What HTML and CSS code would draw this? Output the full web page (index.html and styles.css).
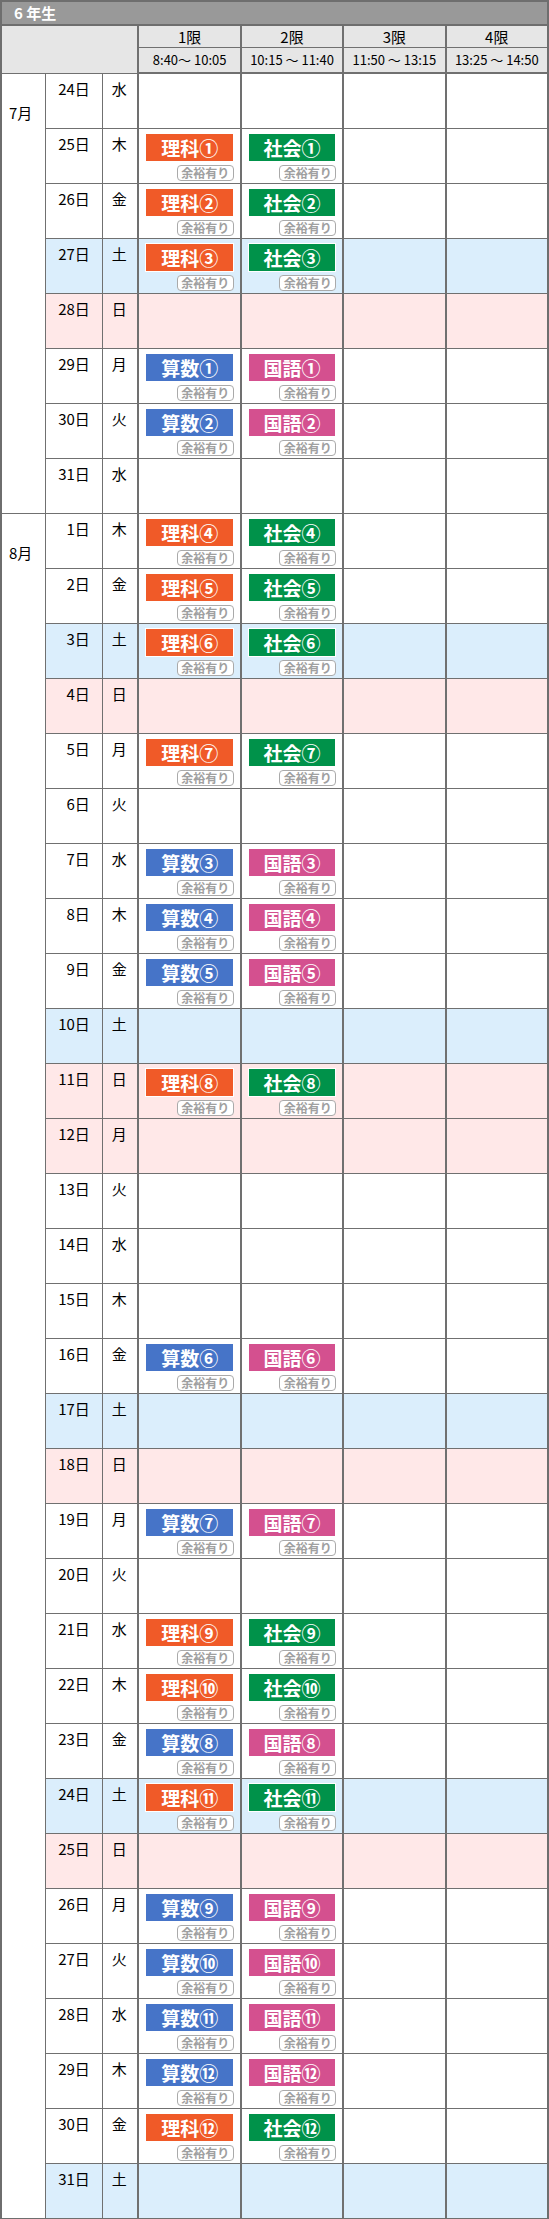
FILE: index.html
```html
<!DOCTYPE html>
<html lang="ja">
<head>
    <meta charset="UTF-8">
    <meta name="viewport" content="width=device-width, initial-scale=1.0">
    <title>夏期講習 日程表 6年生</title>
    <link rel="stylesheet" href="styles.css">
</head>

<body>
    <table class="schedule">
        <colgroup>
            <col class="col-month">
            <col class="col-date">
            <col class="col-wday">
            <col class="col-period">
            <col class="col-period">
            <col class="col-period">
            <col class="col-period">
        </colgroup>
        <thead>
            <tr>
                <th colspan="7" class="grade">6 年生</th>
            </tr>
            <tr>
                <th colspan="3" rowspan="2" class="corner"></th>
                <th class="period">1限</th>
                <th class="period">2限</th>
                <th class="period">3限</th>
                <th class="period">4限</th>
            </tr>
            <tr>
                <th class="time">8:40～ 10:05</th>
                <th class="time">10:15 ～ 11:40</th>
                <th class="time">11:50 ～ 13:15</th>
                <th class="time">13:25 ～ 14:50</th>
            </tr>
        </thead>
        <tbody>
            <!-- 7月 -->
            <tr>
                <td rowspan="8" class="month">7月</td>
                <td class="date">24日</td><td class="wday">水</td>
                <td></td><td></td><td></td><td></td>
            </tr>
            <tr>
                <td class="date">25日</td><td class="wday">木</td>
                <td><span class="lesson rika">理科①</span><span class="yoyu">余裕有り</span></td>
                <td><span class="lesson shakai">社会①</span><span class="yoyu">余裕有り</span></td>
                <td></td><td></td>
            </tr>
            <tr>
                <td class="date">26日</td><td class="wday">金</td>
                <td><span class="lesson rika">理科②</span><span class="yoyu">余裕有り</span></td>
                <td><span class="lesson shakai">社会②</span><span class="yoyu">余裕有り</span></td>
                <td></td><td></td>
            </tr>
            <tr class="sat">
                <td class="date">27日</td><td class="wday">土</td>
                <td><span class="lesson rika">理科③</span><span class="yoyu">余裕有り</span></td>
                <td><span class="lesson shakai">社会③</span><span class="yoyu">余裕有り</span></td>
                <td></td><td></td>
            </tr>
            <tr class="sun">
                <td class="date">28日</td><td class="wday">日</td>
                <td></td><td></td><td></td><td></td>
            </tr>
            <tr>
                <td class="date">29日</td><td class="wday">月</td>
                <td><span class="lesson sansu">算数①</span><span class="yoyu">余裕有り</span></td>
                <td><span class="lesson kokugo">国語①</span><span class="yoyu">余裕有り</span></td>
                <td></td><td></td>
            </tr>
            <tr>
                <td class="date">30日</td><td class="wday">火</td>
                <td><span class="lesson sansu">算数②</span><span class="yoyu">余裕有り</span></td>
                <td><span class="lesson kokugo">国語②</span><span class="yoyu">余裕有り</span></td>
                <td></td><td></td>
            </tr>
            <tr>
                <td class="date">31日</td><td class="wday">水</td>
                <td></td><td></td><td></td><td></td>
            </tr>

            <!-- 8月 -->
            <tr>
                <td rowspan="31" class="month">8月</td>
                <td class="date">1日</td><td class="wday">木</td>
                <td><span class="lesson rika">理科④</span><span class="yoyu">余裕有り</span></td>
                <td><span class="lesson shakai">社会④</span><span class="yoyu">余裕有り</span></td>
                <td></td><td></td>
            </tr>
            <tr>
                <td class="date">2日</td><td class="wday">金</td>
                <td><span class="lesson rika">理科⑤</span><span class="yoyu">余裕有り</span></td>
                <td><span class="lesson shakai">社会⑤</span><span class="yoyu">余裕有り</span></td>
                <td></td><td></td>
            </tr>
            <tr class="sat">
                <td class="date">3日</td><td class="wday">土</td>
                <td><span class="lesson rika">理科⑥</span><span class="yoyu">余裕有り</span></td>
                <td><span class="lesson shakai">社会⑥</span><span class="yoyu">余裕有り</span></td>
                <td></td><td></td>
            </tr>
            <tr class="sun">
                <td class="date">4日</td><td class="wday">日</td>
                <td></td><td></td><td></td><td></td>
            </tr>
            <tr>
                <td class="date">5日</td><td class="wday">月</td>
                <td><span class="lesson rika">理科⑦</span><span class="yoyu">余裕有り</span></td>
                <td><span class="lesson shakai">社会⑦</span><span class="yoyu">余裕有り</span></td>
                <td></td><td></td>
            </tr>
            <tr>
                <td class="date">6日</td><td class="wday">火</td>
                <td></td><td></td><td></td><td></td>
            </tr>
            <tr>
                <td class="date">7日</td><td class="wday">水</td>
                <td><span class="lesson sansu">算数③</span><span class="yoyu">余裕有り</span></td>
                <td><span class="lesson kokugo">国語③</span><span class="yoyu">余裕有り</span></td>
                <td></td><td></td>
            </tr>
            <tr>
                <td class="date">8日</td><td class="wday">木</td>
                <td><span class="lesson sansu">算数④</span><span class="yoyu">余裕有り</span></td>
                <td><span class="lesson kokugo">国語④</span><span class="yoyu">余裕有り</span></td>
                <td></td><td></td>
            </tr>
            <tr>
                <td class="date">9日</td><td class="wday">金</td>
                <td><span class="lesson sansu">算数⑤</span><span class="yoyu">余裕有り</span></td>
                <td><span class="lesson kokugo">国語⑤</span><span class="yoyu">余裕有り</span></td>
                <td></td><td></td>
            </tr>
            <tr class="sat">
                <td class="date">10日</td><td class="wday">土</td>
                <td></td><td></td><td></td><td></td>
            </tr>
            <tr class="sun">
                <td class="date">11日</td><td class="wday">日</td>
                <td><span class="lesson rika">理科⑧</span><span class="yoyu">余裕有り</span></td>
                <td><span class="lesson shakai">社会⑧</span><span class="yoyu">余裕有り</span></td>
                <td></td><td></td>
            </tr>
            <tr class="sun">
                <td class="date">12日</td><td class="wday">月</td>
                <td></td><td></td><td></td><td></td>
            </tr>
            <tr>
                <td class="date">13日</td><td class="wday">火</td>
                <td></td><td></td><td></td><td></td>
            </tr>
            <tr>
                <td class="date">14日</td><td class="wday">水</td>
                <td></td><td></td><td></td><td></td>
            </tr>
            <tr>
                <td class="date">15日</td><td class="wday">木</td>
                <td></td><td></td><td></td><td></td>
            </tr>
            <tr>
                <td class="date">16日</td><td class="wday">金</td>
                <td><span class="lesson sansu">算数⑥</span><span class="yoyu">余裕有り</span></td>
                <td><span class="lesson kokugo">国語⑥</span><span class="yoyu">余裕有り</span></td>
                <td></td><td></td>
            </tr>
            <tr class="sat">
                <td class="date">17日</td><td class="wday">土</td>
                <td></td><td></td><td></td><td></td>
            </tr>
            <tr class="sun">
                <td class="date">18日</td><td class="wday">日</td>
                <td></td><td></td><td></td><td></td>
            </tr>
            <tr>
                <td class="date">19日</td><td class="wday">月</td>
                <td><span class="lesson sansu">算数⑦</span><span class="yoyu">余裕有り</span></td>
                <td><span class="lesson kokugo">国語⑦</span><span class="yoyu">余裕有り</span></td>
                <td></td><td></td>
            </tr>
            <tr>
                <td class="date">20日</td><td class="wday">火</td>
                <td></td><td></td><td></td><td></td>
            </tr>
            <tr>
                <td class="date">21日</td><td class="wday">水</td>
                <td><span class="lesson rika">理科⑨</span><span class="yoyu">余裕有り</span></td>
                <td><span class="lesson shakai">社会⑨</span><span class="yoyu">余裕有り</span></td>
                <td></td><td></td>
            </tr>
            <tr>
                <td class="date">22日</td><td class="wday">木</td>
                <td><span class="lesson rika">理科⑩</span><span class="yoyu">余裕有り</span></td>
                <td><span class="lesson shakai">社会⑩</span><span class="yoyu">余裕有り</span></td>
                <td></td><td></td>
            </tr>
            <tr>
                <td class="date">23日</td><td class="wday">金</td>
                <td><span class="lesson sansu">算数⑧</span><span class="yoyu">余裕有り</span></td>
                <td><span class="lesson kokugo">国語⑧</span><span class="yoyu">余裕有り</span></td>
                <td></td><td></td>
            </tr>
            <tr class="sat">
                <td class="date">24日</td><td class="wday">土</td>
                <td><span class="lesson rika">理科⑪</span><span class="yoyu">余裕有り</span></td>
                <td><span class="lesson shakai">社会⑪</span><span class="yoyu">余裕有り</span></td>
                <td></td><td></td>
            </tr>
            <tr class="sun">
                <td class="date">25日</td><td class="wday">日</td>
                <td></td><td></td><td></td><td></td>
            </tr>
            <tr>
                <td class="date">26日</td><td class="wday">月</td>
                <td><span class="lesson sansu">算数⑨</span><span class="yoyu">余裕有り</span></td>
                <td><span class="lesson kokugo">国語⑨</span><span class="yoyu">余裕有り</span></td>
                <td></td><td></td>
            </tr>
            <tr>
                <td class="date">27日</td><td class="wday">火</td>
                <td><span class="lesson sansu">算数⑩</span><span class="yoyu">余裕有り</span></td>
                <td><span class="lesson kokugo">国語⑩</span><span class="yoyu">余裕有り</span></td>
                <td></td><td></td>
            </tr>
            <tr>
                <td class="date">28日</td><td class="wday">水</td>
                <td><span class="lesson sansu">算数⑪</span><span class="yoyu">余裕有り</span></td>
                <td><span class="lesson kokugo">国語⑪</span><span class="yoyu">余裕有り</span></td>
                <td></td><td></td>
            </tr>
            <tr>
                <td class="date">29日</td><td class="wday">木</td>
                <td><span class="lesson sansu">算数⑫</span><span class="yoyu">余裕有り</span></td>
                <td><span class="lesson kokugo">国語⑫</span><span class="yoyu">余裕有り</span></td>
                <td></td><td></td>
            </tr>
            <tr>
                <td class="date">30日</td><td class="wday">金</td>
                <td><span class="lesson rika">理科⑫</span><span class="yoyu">余裕有り</span></td>
                <td><span class="lesson shakai">社会⑫</span><span class="yoyu">余裕有り</span></td>
                <td></td><td></td>
            </tr>
            <tr class="sat">
                <td class="date">31日</td><td class="wday">土</td>
                <td></td><td></td><td></td><td></td>
            </tr>
        </tbody>
    </table>
</body>

</html>
```

FILE: styles.css
```css
body {
    margin: 0;
    font-family: "Noto Sans CJK JP", "Noto Sans", sans-serif;
    color: #000;
    background-color: #fff;
}

.schedule {
    width: 549px;
    border-collapse: collapse;
    table-layout: fixed;
    border: 2px solid #6e6e6e;
}

.col-month { width: 44px; }
.col-date { width: 57px; }
.col-wday { width: 36px; }
.col-period { width: 102px; }

th, td {
    border: 1px solid #707070;
    padding: 0;
}

/* title bar */
.grade {
    height: 22px;
    background-color: #999;
    color: #fff;
    font-size: 15px;
    font-weight: bold;
    text-align: left;
    padding-left: 12px;
    line-height: 22px;
    border-bottom: 2px solid #6e6e6e;
}

.corner {
    background-color: #e6e6e6;
}

.period,
.time {
    background-color: #e6e6e6;
    font-weight: normal;
    text-align: center;
    border-left: 2px solid #707070;
}

.period {
    height: 21px;
    font-size: 15px;
    line-height: 21px;
}

.time {
    height: 24px;
    font-size: 13px;
    line-height: 24px;
    border-bottom: 2px solid #707070;
}

/* body rows */
tbody td {
    height: 50px;
    padding: 4px 6px 0;
    vertical-align: top;
    border-left: 2px solid #707070;
}

tbody td.month,
tbody td.date,
tbody td.wday {
    border-left-width: 1px;
    font-size: 15px;
    line-height: 21px;
}

tbody td.month {
    padding: 28px 0 0 7px;
    background-color: #fff;
}

tbody td.date {
    text-align: right;
    padding-right: 12px;
}

tbody td.wday {
    text-align: center;
    padding: 4px 2px 0 0;
}

.sat td {
    background-color: #dbeefc;
}

.sun td {
    background-color: #ffe8e8;
}

/* lesson badges */
.lesson {
    display: block;
    height: 27px;
    border: 1px solid #fff;
    color: #fff;
    font-size: 19px;
    font-weight: bold;
    line-height: 27px;
    text-align: center;
}

.rika { background-color: #f05a28; }
.shakai { background-color: #00924a; }
.sansu { background-color: #4674c8; }
.kokugo { background-color: #d4508f; }

.yoyu {
    display: block;
    width: 55px;
    height: 14px;
    margin: 3px 0 0 auto;
    border: 1px solid #aaa;
    border-radius: 4px;
    color: #a0a0a0;
    background-color: #fff;
    font-size: 12px;
    font-weight: bold;
    line-height: 14px;
    text-align: center;
}
```
